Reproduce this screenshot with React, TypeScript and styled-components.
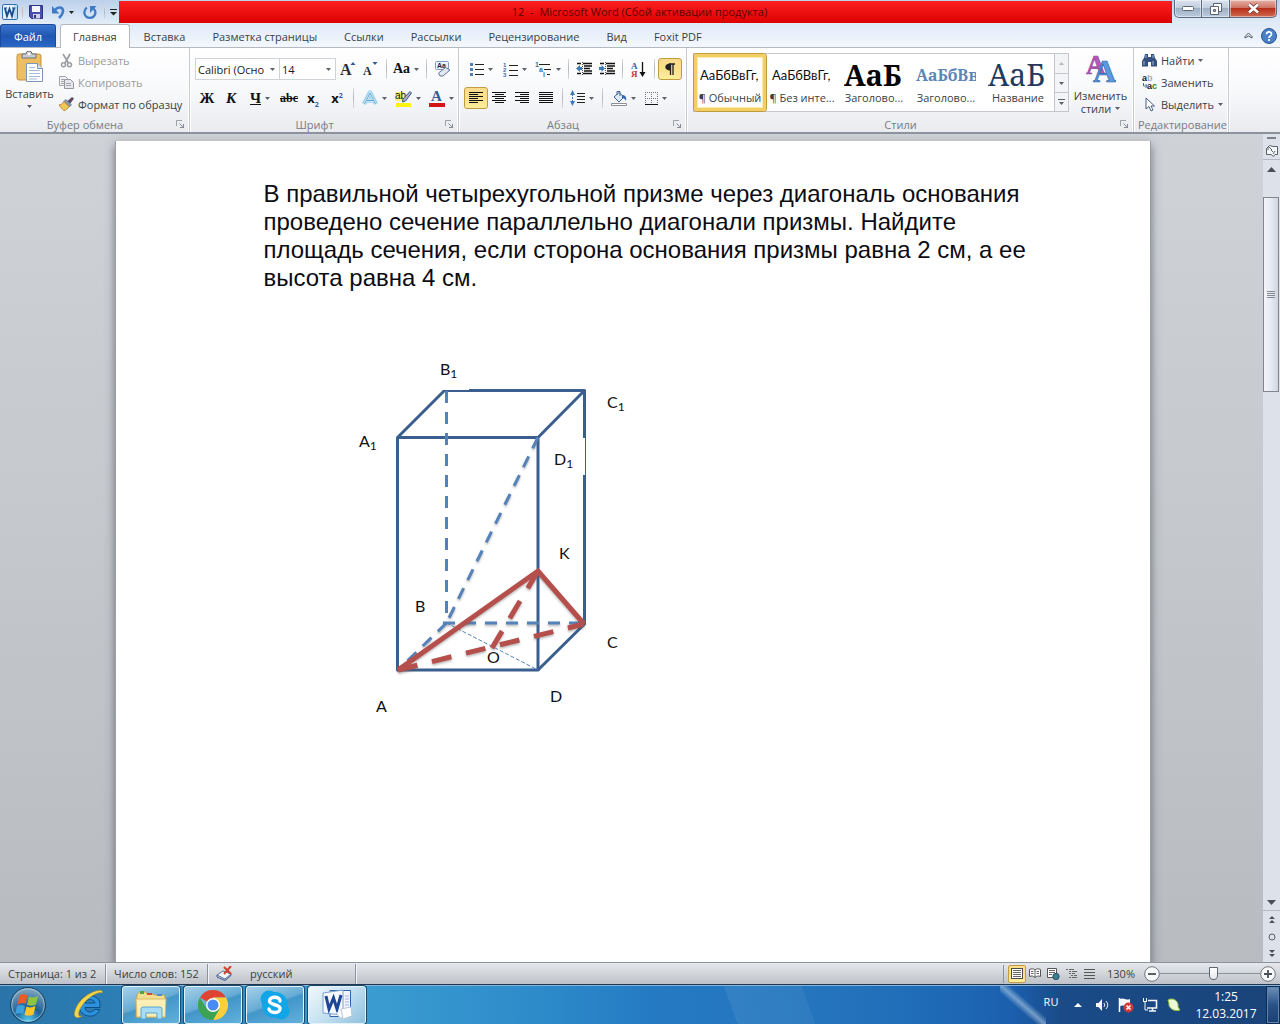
import React from "react";
import styled, { createGlobalStyle, css } from "styled-components";

const UI = `"Open Sans", "Noto Sans", sans-serif`;
const CALIBRI = `Lato, "Open Sans", sans-serif`;
const CAMBRIA = `"Noto Serif", "Liberation Serif", serif`;

const GlobalStyle = createGlobalStyle`
  * { box-sizing: border-box; }
  body { margin: 0; font-family: ${UI}; font-size: 11px; color: #3b3f45; }
  button, select, input { font: inherit; color: inherit; }
  button { border: 0; padding: 0; margin: 0; background: none; cursor: default; }
  svg { display: block; flex: none; }
`;

const Window = styled.div`
  display: flex;
  flex-direction: column;
  height: 100vh;
  overflow: hidden;
`;

/* ---------- title bar ---------- */

const TitleBar = styled.header`
  display: flex;
  height: 24px;
  flex: none;
  background: linear-gradient(#bcd0ea, #d3e2f4 60%, #e3edf8);
`;

const QuickAccess = styled.div`
  display: flex;
  align-items: center;
  width: 119px;
  padding-left: 1px;
`;

const QuickButton = styled.button<{ $w: number }>`
  display: flex;
  align-items: center;
  justify-content: center;
  gap: 4px;
  width: ${(p) => p.$w}px;
  height: 20px;
`;

const Divider = styled.span<{ $w?: number; $h?: number }>`
  display: flex;
  justify-content: center;
  width: ${(p) => p.$w ?? 8}px;
  height: ${(p) => p.$h ?? 20}px;
  &::before {
    content: "";
    width: 1px;
    background: linear-gradient(#d8dade, #b3b7bd 50%, #d8dade);
  }
`;

const Title = styled.h1`
  flex: 1;
  margin: 1px 0 0;
  padding-right: 12px;
  height: 22px;
  line-height: 22px;
  text-align: center;
  font-size: 11px;
  font-weight: 400;
  color: #5c0303;
  white-space: pre;
  background: linear-gradient(#fb2020, #ee1010 50%, #dc0000);
`;

const WindowButtons = styled.div`
  display: flex;
  width: 108px;
  height: 18px;
  padding: 0 3px 0 2px;
`;

const WindowButton = styled.button<{ $w: number; $close?: boolean }>`
  display: flex;
  align-items: center;
  justify-content: center;
  width: ${(p) => p.$w}px;
  border: 1px solid #5d6b80;
  border-top: 0;
  border-left-width: ${(p) => (p.$close ? 0 : 1)}px;
  box-shadow: inset 0 0 0 1px rgba(255, 255, 255, 0.45);
  background: ${(p) =>
    p.$close
      ? "linear-gradient(#e5b3a8, #cf7464 45%, #b8301b 50%, #cf6a50)"
      : "linear-gradient(#dbe3ee, #c3cedd 45%, #9fb0c6 50%, #bccbdd)"};
  border-radius: ${(p) => (p.$close ? "0 0 5px 0" : "0")};
  &:first-child { border-radius: 0 0 0 5px; }
  &:nth-child(2) { border-left-width: 0; }
`;

/* ---------- tabs ---------- */

const TabRow = styled.nav`
  display: flex;
  gap: 1px;
  height: 24px;
  flex: none;
  background: linear-gradient(#dfeaf7, #f4f8fd);
  border-bottom: 1px solid #b4b9bf;
`;

const FileTab = styled.button`
  width: 56px;
  height: 23px;
  margin-right: 3px;
  border: 1px solid #1d4a9c;
  border-bottom: 0;
  border-radius: 3px 3px 0 0;
  color: #fff;
  background: linear-gradient(#3a78cf, #1f56b3 50%, #2a68c8);
`;

const Tab = styled.button<{ $active?: boolean }>`
  padding: 0 13px;
  height: 24px;
  ${(p) =>
    p.$active &&
    css`
      padding: 0 12px;
      border: 1px solid #b4b9bf;
      border-bottom: 0;
      border-radius: 3px 3px 0 0;
      background: #fff;
    `}
`;

const TabTools = styled.div`
  display: flex;
  align-items: center;
  gap: 8px;
  margin-left: auto;
  padding-right: 3px;
`;

/* ---------- ribbon ---------- */

const Ribbon = styled.section`
  display: flex;
  height: 86px;
  flex: none;
  background: linear-gradient(#fff, #f8f9fb 50%, #e9ebef);
  border-bottom: 2px solid #8d939c;
`;

const Group = styled.section<{ $w: number }>`
  display: flex;
  flex-direction: column;
  width: ${(p) => p.$w}px;
  flex: none;
  border-right: 1px solid #c6cad0;
  box-shadow: inset -1px 0 #fff, 1px 0 #fff;
`;

const GroupBody = styled.div<{ $pad?: string }>`
  display: flex;
  flex: 1;
  min-width: 0;
  padding: ${(p) => p.$pad ?? "0"};
`;

const GroupFooter = styled.footer`
  display: flex;
  align-items: center;
  gap: 6px;
  height: 15px;
  color: #767c86;
  padding: 0 4px 0 0;
`;

const GroupName = styled.span`
  flex: 1;
  text-align: center;
  white-space: nowrap;
  &:only-child { padding-left: 4px; }
`;

const Launcher = styled.button`
  display: flex;
  width: 9px;
  height: 9px;
`;

const BigButton = styled.button<{ $w: number }>`
  display: flex;
  flex-direction: column;
  align-items: center;
  width: ${(p) => p.$w}px;
  flex: none;
  gap: 5px;
  padding-top: 2px;
  line-height: 13px;
`;

const BigLabel = styled.span`
  display: inline-flex;
  align-items: center;
  gap: 4px;
`;

const ButtonStack = styled.div`
  display: flex;
  flex-direction: column;
`;

const TextButton = styled.button<{ $muted?: boolean }>`
  display: flex;
  align-items: center;
  gap: 4px;
  height: 22px;
  white-space: nowrap;
  color: ${(p) => (p.$muted ? "#9b9b9b" : "#3b3f45")};
`;

const ToolRows = styled.div`
  display: flex;
  flex-direction: column;
  gap: 5px;
  padding-top: 9px;
`;

const ToolRow = styled.div`
  display: flex;
  align-items: center;
  height: 24px;
`;

const ToolButton = styled.button<{ $w: number; $on?: boolean }>`
  display: flex;
  align-items: center;
  justify-content: center;
  gap: 4px;
  width: ${(p) => p.$w}px;
  height: 22px;
  flex: none;
  border-radius: 3px;
  ${(p) =>
    p.$on &&
    css`
      border: 1px solid #c29b3f;
      background: linear-gradient(#fbdb8c, #fbe08a 50%, #fdee9c);
    `}
`;

const Combo = styled.span<{ $w: number }>`
  display: grid;
  align-items: center;
  width: ${(p) => p.$w}px;
  height: 22px;
  border: 1px solid #d0d3d8;
  background: #fff;
  & + & { border-left: 0; }
  select, svg { grid-area: 1 / 1; }
  svg { justify-self: end; margin-right: 4px; pointer-events: none; }
`;

const ComboSelect = styled.select`
  appearance: none;
  width: 100%;
  height: 20px;
  padding: 0 12px 0 2px;
  border: 0;
  background: none;
  color: #1a1a1a;
  overflow: hidden;
`;

/* ---------- style gallery ---------- */

const Gallery = styled.div`
  display: flex;
  height: 59px;
  border: 1px solid #c3c7cd;
  background: #fff;
`;

const StyleCard = styled.button<{ $on?: boolean }>`
  display: flex;
  flex-direction: column;
  align-items: center;
  justify-content: space-between;
  width: 72px;
  height: 57px;
  overflow: hidden;
  padding: 6px 2px 2px;
  line-height: 16px;
  border: 3px solid transparent;
  white-space: nowrap;
  ${(p) =>
    p.$on &&
    css`
      border-color: #f2cf63;
      border-radius: 3px;
      box-shadow: inset 0 0 0 1px #fbe9ae, 0 0 0 1px #c29b3f;
    `}
`;

const Preview = styled.span<{ $font: string; $size: number; $color: string; $bold?: boolean }>`
  width: 60px;
  height: 24px;
  line-height: 24px;
  text-align: left;
  overflow: hidden;
  font-family: ${(p) => p.$font};
  font-size: ${(p) => p.$size}px;
  font-weight: ${(p) => (p.$bold ? 700 : 400)};
  color: ${(p) => p.$color};
`;

const GalleryScroll = styled.div`
  display: grid;
  grid-template-rows: repeat(3, 1fr);
  width: 14px;
  border-left: 1px solid #c3c7cd;
  background: #f3f4f6;
`;

const GalleryArrow = styled.button`
  display: flex;
  align-items: center;
  justify-content: center;
  & + & { border-top: 1px solid #c3c7cd; }
`;

/* ---------- workspace ---------- */

const Workspace = styled.main`
  display: flex;
  flex: 1;
  min-height: 0;
`;

const Desk = styled.div`
  display: flex;
  justify-content: center;
  flex: 1;
  min-width: 0;
  padding: 7px 0 0 2px;
  overflow: hidden;
  background: linear-gradient(#cfd2d7, #c4c7cb 50%, #b8bbc0);
`;

const Page = styled.article`
  width: 1036px;
  padding: 39px 100px 0 148px;
  background: #fff;
  border: solid #9a9ea5;
  border-width: 0 1px;
  box-shadow: 0 4px 9px rgba(70, 75, 85, 0.7);
`;

const Problem = styled.p`
  margin: 0;
  font-family: "Liberation Sans", Arial, sans-serif;
  font-size: 24px;
  line-height: 28px;
  color: #0c0c14;
  white-space: nowrap;
`;

const Figure = styled.figure`
  margin: 58px 0 0 76px;
`;

const ScrollColumn = styled.aside`
  display: flex;
  flex-direction: column;
  align-items: center;
  width: 17px;
  background: #dde1ea;
`;

const ScrollButton = styled.button<{ $h: number; $line?: boolean }>`
  display: flex;
  align-items: center;
  justify-content: center;
  width: 17px;
  height: ${(p) => p.$h}px;
  flex: none;
  border-bottom: ${(p) => (p.$line ? "1px solid #b4b9c2" : "0")};
`;

const ScrollTrack = styled.div`
  flex: 1;
  width: 100%;
  padding-top: 19px;
`;

const ScrollThumb = styled.div`
  display: flex;
  align-items: center;
  justify-content: center;
  width: 16px;
  height: 28%;
  border: 1px solid #82868f;
  background: linear-gradient(90deg, #f3f5fa, #e6eaf2 50%, #cfd5e0);
`;

/* ---------- status bar ---------- */

const StatusBar = styled.footer`
  display: flex;
  align-items: center;
  height: 22px;
  flex: none;
  border-top: 1px solid #8d939c;
  background: linear-gradient(#e6e8ec, #cdd1d6 60%, #bfc3c9);
`;

const StatusItem = styled.button<{ $w: number; $edge?: boolean }>`
  display: flex;
  align-items: center;
  height: 20px;
  width: ${(p) => p.$w}px;
  padding-left: 8px;
  white-space: nowrap;
  border-right: 1px solid ${(p) => (p.$edge ? "#8d939c" : "transparent")};
  box-shadow: ${(p) => (p.$edge ? "1px 0 #f3f4f6" : "none")};
`;

const ViewTools = styled.div`
  display: flex;
  align-items: center;
  margin-left: auto;
  padding: 0 4px;
  border-left: 1px solid #8d939c;
`;

const ViewButton = styled(ToolButton)`
  height: 18px;
  border-radius: 2px;
`;

const ZoomValue = styled.button`
  width: 46px;
  text-align: center;
`;

const ZoomButton = styled.button`
  display: flex;
  width: 16px;
  height: 16px;
`;

const ZoomRange = styled.input`
  appearance: none;
  width: 100px;
  height: 16px;
  margin: 0;
  background: linear-gradient(#8d939c, #8d939c) center / 100% 1px no-repeat;
  &::-webkit-slider-thumb {
    appearance: none;
    width: 9px;
    height: 13px;
    background: linear-gradient(#fff, #e6e8ec);
    border: 1px solid #5f6670;
    border-radius: 1px 1px 5px 5px;
  }
`;

/* ---------- task bar ---------- */

const TaskBar = styled.footer`
  display: flex;
  align-items: center;
  height: 40px;
  flex: none;
  border-top: 1px solid #22364f;
  box-shadow: inset 0 1px #82b6dc;
  background:
    linear-gradient(to top right, transparent 40%, rgba(190, 215, 235, 0.55) 50%, transparent 60%) 81% 0 / 46px 40px no-repeat,
    linear-gradient(70deg, transparent 57%, rgba(255, 255, 255, 0.07) 57%, rgba(255, 255, 255, 0.05) 63%, transparent 63%),
    linear-gradient(90deg, #2a74a8 0, #2b7db3 8%, #3b9dd0 28%, #2f8ecb 40%, #2479c2 52%, #2474bd 65%, #1d66b4 76%, #1b5fae 79%, #1a4b88 83%, #194378 100%);
`;

const StartButton = styled.button`
  display: flex;
  justify-content: center;
  width: 55px;
`;

const Pinned = styled.button`
  display: flex;
  justify-content: center;
  width: 67px;
`;

const TaskButton = styled.button<{ $active?: boolean }>`
  display: flex;
  align-items: center;
  justify-content: center;
  width: 58px;
  height: 38px;
  margin-right: 4px;
  border: 1px solid #e3f2fb;
  border-radius: 3px;
  box-shadow: 0 0 0 1px #1b4a6c;
  background: ${(p) =>
    p.$active
      ? "linear-gradient(135deg, #f1f8fc, #c4e0f0 50%, #8fc1de)"
      : "linear-gradient(160deg, #a5d0e8, #67acd5 45%, #4296c8 50%, #62b1dc)"};
`;

const Tray = styled.div`
  display: flex;
  align-items: center;
  margin-left: auto;
  height: 100%;
  color: #fff;
`;

const TrayButton = styled.button<{ $w: number }>`
  display: flex;
  align-items: center;
  justify-content: center;
  width: ${(p) => p.$w}px;
`;

const Language = styled.button`
  width: 30px;
  padding-bottom: 6px;
`;

const Clock = styled.time`
  display: flex;
  flex-direction: column;
  width: 80px;
  text-align: center;
  line-height: 17px;
  font-size: 12px;
`;

const ShowDesktop = styled.button`
  width: 14px;
  height: 38px;
  border: 1px solid #0f2c50;
  box-shadow: inset 0 0 0 1px #5d84b0;
  background: linear-gradient(#6d90b8, #2a5287 50%, #1b3f72);
`;

/* ---------- icons ---------- */

const Svg = ({ w, h, children }: { w: number; h: number; children: React.ReactNode }) => (
  <svg width={w} height={h} viewBox={`0 0 ${w} ${h}`} fill="none" aria-hidden="true">
    {children}
  </svg>
);

const Caret = ({ color = "#5c6068" }: { color?: string }) => (
  <Svg w={5} h={3}><path d="M0 0h5L2.500 3z" fill={color} /></Svg>
);

const LauncherIcon = () => (
  <Svg w={9} h={9}>
    <path d="M.5 6V.5H6" stroke="#9a9fa8" />
    <path d="M3.500 3.500l3 3M7.500 4v3.500H4" stroke="#858a93" />
    <path d="M8 5v3H5z" fill="#858a93" />
  </Svg>
);

const WordIcon = () => (
  <Svg w={16} h={16}>
    <rect x=".5" y=".5" width="15" height="15" rx="1.500" fill="#e4f1fb" stroke="#2f6eb0" />
    <path d="M12 1h3v14h-3z" fill="#b9dcf3" />
    <path d="M3 4l2 8 2.500-7 2.500 7 2-8" stroke="#1b4b8f" strokeWidth="1.900" />
    <path d="M2 4h3M10 4h3.500" stroke="#1b4b8f" />
  </Svg>
);

const SaveIcon = () => (
  <Svg w={14} h={14}>
    <path d="M.5.500h13v13h-11l-2-2z" fill="#4a4fae" stroke="#2f3480" />
    <path d="M3 1h8v6H3z" fill="#f4f6fd" />
    <path d="M4 9h7v4.500H4z" fill="#d0d3e8" />
    <path d="M5 10h2v3H5z" fill="#2f3480" />
  </Svg>
);

const UndoIcon = () => (
  <Svg w={13} h={14}>
    <path d="M3 5c3-4 8-3 8 1 0 3-2 5-4 7" stroke="#3f7cc6" strokeWidth="2.600" />
    <path d="M0 1v7.500h7.500z" fill="#3f7cc6" />
  </Svg>
);

const RedoIcon = () => (
  <Svg w={14} h={14}>
    <path d="M3.800 2.500C-1 7 2 12.800 7 12.800s7.500-5.800 3-9.800" stroke="#3f7cc6" strokeWidth="2.300" />
    <path d="M7 8V1h6.500z" fill="#3f7cc6" />
  </Svg>
);

const PasteIcon = () => (
  <Svg w={28} h={31}>
    <rect x="1" y="3" width="24" height="26" rx="2" fill="#eebf62" stroke="#c6913a" />
    <path d="M6 7V3h4a3 3 0 0 1 6 0h4v4z" fill="#c9cdd3" stroke="#6e737b" />
    <circle cx="13" cy="3" r="1.300" fill="#fff" />
    <path d="M10.500 12.500h11l5 5v13h-16z" fill="#fdfeff" stroke="#7f95b5" />
    <path d="M21.500 12.500v5h5" fill="#d8e4f4" stroke="#7f95b5" />
    <path d="M13 16.500h6M13 19.500h11M13 22.500h11M13 25.500h11M13 28h8" stroke="#a9bbd6" />
  </Svg>
);

const CutIcon = () => (
  <Svg w={15} h={15}>
    <path d="M4 1l5.500 9M11 1L6 10" stroke="#9a9da3" strokeWidth="1.700" />
    <circle cx="4.500" cy="11.800" r="2" stroke="#9a9da3" strokeWidth="1.500" />
    <circle cx="10.500" cy="11.800" r="2" stroke="#9a9da3" strokeWidth="1.500" />
  </Svg>
);

const CopyIcon = () => (
  <Svg w={15} h={14}>
    <path d="M.5 1.500h6l2 2v7h-8z" fill="#f0f0f2" stroke="#a3a6ad" />
    <path d="M5.500 4.500h6l3 3v6h-9z" fill="#e6e7ea" stroke="#94979e" />
    <path d="M2 4.500h3M2 6.500h3M2 8.500h3M7 8.500h5M7 10.500h5" stroke="#a3a6ad" />
  </Svg>
);

const BrushIcon = () => (
  <Svg w={15} h={14}>
    <path d="M15 1.500L13 0 8.500 4 11 7z" fill="#5c4c66" />
    <path d="M7 2.500l5.500 5.500-2.500 2-5.500-5.500z" fill="#8a97ad" stroke="#55617a" strokeWidth=".6" />
    <path d="M5 4.500L10 9.500c-1 2-3 3.500-5 4.300-1-1-4-4-5-6 2 0 3.500-1.300 5-3.300z" fill="#f0c657" stroke="#a97e2a" strokeWidth=".8" />
  </Svg>
);

const Glyph = styled.span<{ $size: number; $italic?: boolean; $deco: string }>`
  font-family: "Liberation Serif", serif;
  font-weight: 700;
  font-size: ${(p) => p.$size}px;
  line-height: 18px;
  font-style: ${(p) => (p.$italic ? "italic" : "normal")};
  text-decoration: ${(p) => p.$deco};
  color: #111;
`;

const Serif = ({ children, size = 15, italic, under, strike }: { children: string; size?: number; italic?: boolean; under?: boolean; strike?: boolean }) => (
  <Glyph $size={size} $italic={italic} $deco={under ? "underline" : strike ? "line-through" : "none"}>{children}</Glyph>
);

const Script = styled.span`
  font-weight: 700;
  font-size: 13px;
  line-height: 16px;
  color: #111;
  sub, sup { font-size: 7px; line-height: 0; color: #2c5aa8; }
`;

const SizeIcon = ({ up }: { up?: boolean }) => (
  <Svg w={16} h={16}>
    <text x="0" y="14" fontFamily="Liberation Serif" fontWeight="700" fontSize={up ? 16 : 12} fill="#2a2d33">A</text>
    <path d={up ? "M10.500 4h5L13 1z" : "M9.500 1h5L12 4z"} fill="#2c5a96" />
  </Svg>
);

const ClearIcon = () => (
  <Svg w={17} h={16}>
    <rect x="1.500" y=".5" width="13" height="8" rx="1" fill="#e9f1fb" stroke="#7f9dc4" />
    <text x="3" y="7" fontFamily="Liberation Sans" fontWeight="700" fontSize="7" fill="#1b2a44">Aa</text>
    <path d="M4.500 12l7-5.500 4.500 2.500-7 6H6z" fill="#e3e7f3" stroke="#65749a" />
  </Svg>
);

const EffectIcon = () => (
  <Svg w={16} h={16}>
    <path d="M2 14L8 2.500 14 14M5 10.500h6" stroke="#9fd3ee" strokeWidth="4.500" strokeLinejoin="round" />
    <path d="M2.500 14L8 3l5.500 11M5 10.500h6" stroke="#e9f7fd" strokeWidth="1.800" />
    <path d="M2.500 14L8 3l5.500 11M5 10.500h6" stroke="#4e96c8" strokeWidth=".9" />
  </Svg>
);

const HighlightIcon = () => (
  <Svg w={17} h={17}>
    <path d="M1 13h15v4H1z" fill="#fbf315" />
    <path d="M0 2h9v9H0z" fill="#fbf27a" />
    <text x="0" y="9" fontFamily="Liberation Sans" fontSize="10" fill="#111">ab</text>
    <path d="M15 1.500l1.500 1.500-6 8-3 1 .5-3z" fill="#9fb4d0" stroke="#445877" />
  </Svg>
);

const FontColorIcon = () => (
  <Svg w={16} h={17}>
    <text x="2" y="11" fontFamily="Liberation Serif" fontWeight="700" fontSize="15" fill="#3a5a94">A</text>
    <path d="M0 13h16v4H0z" fill="#d41414" />
  </Svg>
);

const BulletIcon = () => (
  <Svg w={14} h={14}>
    <path d="M5 2.500h9M5 7.500h9M5 12.500h9" stroke="#222" />
    <path d="M0 1h3v3H0zM0 6h3v3H0zM0 11h3v3H0z" fill="#4d7fb8" />
  </Svg>
);

const NumberIcon = () => (
  <Svg w={15} h={15}>
    <path d="M6 3.500h9M6 8.500h9M6 13.500h9" stroke="#222" />
    <g fontFamily="Liberation Sans" fontWeight="700" fontSize="6" fill="#3c6ea9">
      <text x="0" y="5">1</text><text x="0" y="10">2</text><text x="0" y="15">3</text>
    </g>
  </Svg>
);

const MultiIcon = () => (
  <Svg w={17} h={15}>
    <path d="M4 2.500h11M9 7.500h7M12 12.500h3" stroke="#222" />
    <g fontFamily="Liberation Sans" fontWeight="700" fontSize="7" fill="#3c6ea9">
      <text x="0" y="5">1</text><text x="4" y="10">a</text><text x="8" y="15">i</text>
    </g>
  </Svg>
);

const IndentIcon = ({ out }: { out?: boolean }) => (
  <Svg w={16} h={14}>
    <path d="M1 1.500h4M7 1.500h9M8 4h8M8 6.500h6M8 9h8M1 11.500h4M7 11.500h9" stroke="#111" strokeWidth="1.400" />
    <path d="M6.500 0v14" stroke="#555" strokeDasharray="1 1" />
    <path d={out ? "M0 6.500L4 3v2h2v3H4v2z" : "M6 6.500L2.500 3v2H0v3h2.500v2z"} fill="#3f78bd" />
  </Svg>
);

const SortIcon = () => (
  <Svg w={15} h={17}>
    <g fontFamily="Liberation Serif" fontWeight="700" fontSize="9">
      <text x="0" y="8" fill="#3a5f9c">A</text><text x="0" y="16" fill="#b23a48">Я</text>
    </g>
    <path d="M11.500 1v12" stroke="#111" strokeWidth="1.300" />
    <path d="M8.500 11h6l-3 5z" fill="#111" />
  </Svg>
);

const PilcrowIcon = () => (
  <Svg w={10} h={13}>
    <path d="M5.500 1v11M8 1v11M4 1h6" stroke="#222" strokeWidth="1.300" />
    <path d="M5.500 .5v7C-1.500 7.500-1.500.5 5.500.5z" fill="#222" />
  </Svg>
);

const AlignIcon = ({ kind }: { kind: "left" | "center" | "right" | "full" }) => {
  const widths = kind === "full" ? [14, 14, 14, 14, 14, 14] : [14, 9, 14, 9, 14, 9];
  return (
    <Svg w={14} h={12}>
      {widths.map((w, i) => (
        <rect key={i} x={kind === "right" ? 14 - w : kind === "center" ? Math.round((14 - w) / 2) : 0} y={i * 2} width={w} height="1" fill="#111" />
      ))}
    </Svg>
  );
};

const SpacingIcon = () => (
  <Svg w={15} h={16}>
    <path d="M7 3.500h8M7 6.500h8M7 9.500h8M7 12.500h8" stroke="#222" />
    <path d="M2.500 4v8" stroke="#3f78bd" strokeDasharray="2 1" />
    <path d="M0 5h5L2.500 0zM0 11h5l-2.500 5z" fill="#3f78bd" />
  </Svg>
);

const FillIcon = () => (
  <Svg w={16} h={16}>
    <path d="M.5 13.500h15v2H.500z" fill="#fff" stroke="#8d8f94" />
    <path d="M3 7l5-4.500L13 7l-5 5z" fill="#dce9f7" stroke="#46658f" />
    <path d="M6 5V1.500h3V6" stroke="#46658f" />
    <path d="M11 5c3 0 5 2 4 6-1-2-2-3-4-3z" fill="#2f68b0" />
  </Svg>
);

const BorderIcon = () => (
  <Svg w={13} h={13}>
    <path d="M.5 0v12M6.500 0v12M12.500 0v12M0 .5h13M0 6.500h13" stroke="#777" strokeDasharray="1 1" />
    <path d="M0 12.500h13" stroke="#111" />
  </Svg>
);

const StylesIcon = () => (
  <Svg w={30} h={29}>
    <text x="0" y="19" fontFamily="Liberation Serif" fontWeight="700" fontSize="27" fill="#b45ab8" stroke="#8c3e96" strokeWidth=".6">A</text>
    <text x="7" y="27" fontFamily="Liberation Serif" fontWeight="700" fontSize="32" fill="#5d9add" stroke="#2f66ae" strokeWidth=".7">A</text>
  </Svg>
);

const FindIcon = () => (
  <Svg w={15} h={13}>
    <path d="M3 0h3v3h3V0h3l1 4 2 3v5.500H9V8H6v4.500H0V7l2-3z" fill="#34517e" />
    <path d="M4 1v3M2 7v4M11 1v3M11 7v4" stroke="#9db6d9" />
  </Svg>
);

const ReplaceIcon = () => (
  <Svg w={15} h={15}>
    <g fontFamily="Liberation Sans" fontWeight="700" fontSize="9">
      <text x="0" y="6" fill="#222">a</text><text x="5" y="6" fill="#aaa">b</text>
      <text x="5" y="14" fill="#222">a</text><text x="10" y="14" fill="#2a8a2a">c</text>
    </g>
    <path d="M1.500 8v3H5M3.500 9l2 2-2 2" stroke="#3c6ea9" />
  </Svg>
);

const PointerIcon = () => (
  <Svg w={15} h={15}>
    <path d="M4 1v11l3-2.500L9 14l2-1-2-4h3.500z" fill="#fff" stroke="#4a5f85" />
  </Svg>
);

const ChevronUp = () => (
  <Svg w={9} h={7}><path d="M1 4.500L4.500 1 8 4.500V6L4.500 4 1 6z" stroke="#4b5461" /></Svg>
);

const HelpIcon = () => (
  <Svg w={16} h={16}>
    <circle cx="8" cy="8" r="7.500" fill="#4c80c6" stroke="#2c5590" />
    <path d="M5.500 6.300c0-3.300 5-3.300 5-.3 0 2-2.500 2-2.500 4M8 11v2" stroke="#fff" strokeWidth="1.700" />
  </Svg>
);

const ProofIcon = () => (
  <Svg w={17} h={15}>
    <path d="M1 9l6-4 8 3-6 5z" fill="#f4f7fc" stroke="#5572a3" />
    <path d="M1 9v2l8 3.500 6-5V8" stroke="#3c5c94" />
    <path d="M8 1l7 7M15 0L8 8" stroke="#d4402e" strokeWidth="2" />
  </Svg>
);

const PageViewIcon = () => (
  <Svg w={12} h={11}>
    <rect x=".5" y=".5" width="11" height="10" fill="#fff" stroke="#4c4c4c" />
    <path d="M2 2.500h8M2 4.500h8M2 6.500h8M2 8.500h8" stroke="#666" />
  </Svg>
);

const ReadViewIcon = () => (
  <Svg w={12} h={11}>
    <path d="M.5 1.500c2-1 4-1 5.500.5 1.500-1.500 3.500-1.500 5.500-.5v7c-2-1-4-.5-5.500 1-1.500-1.500-3.500-2-5.500-1z" fill="#fff" stroke="#555" />
    <path d="M6 2v8M2 3.500h2.500M2 5.500h2.500M7.500 3.500H10M7.500 5.500H10" stroke="#666" />
  </Svg>
);

const WebViewIcon = () => (
  <Svg w={13} h={12}>
    <path d="M.5.500h9v9h-9z" fill="#fff" stroke="#555" />
    <path d="M2 2.500h6M2 4.500h6M2 6.500h3" stroke="#666" />
    <circle cx="9" cy="8.500" r="3.200" fill="#3a7d8f" stroke="#2a5570" />
  </Svg>
);

const OutlineIcon = () => (
  <Svg w={11} h={10}>
    <path d="M0 .5h8M3 2.500h8M3 4.500h6M5 6.500h6M3 8.500h8" stroke="#666" strokeDasharray="2 1 8" />
  </Svg>
);

const DraftIcon = () => (
  <Svg w={11} h={10}><path d="M0 .5h11M0 3.500h11M0 6.500h11M0 9.500h11" stroke="#555" /></Svg>
);

const ZoomSign = ({ plus }: { plus?: boolean }) => (
  <Svg w={16} h={16}>
    <circle cx="8" cy="8" r="7.300" fill="#f8f9fb" stroke="#70757e" />
    <path d={plus ? "M4 8h8M8 4v8" : "M4 8h8"} stroke="#4c5159" strokeWidth="1.800" />
  </Svg>
);

const StartOrb = () => (
  <Svg w={38} h={38}>
    <defs>
      <radialGradient id="orb" cx="50%" cy="95%" r="90%">
        <stop offset="0" stopColor="#57cdf0" /><stop offset=".45" stopColor="#1d5f92" /><stop offset="1" stopColor="#7fa5bf" />
      </radialGradient>
    </defs>
    <circle cx="19" cy="19" r="17.500" fill="url(#orb)" stroke="#1b3f5c" />
    <circle cx="19" cy="19" r="16.300" stroke="#b7d8ea" strokeOpacity=".6" />
    <path d="M10.500 9.500c3.500-2 6-1 8 0L16.500 18c-3-1.500-5.500-1-8 .5z" fill="#ee5a28" />
    <path d="M20 10.500c3 1.500 6 1 9-.5L27 18.500c-3 1.500-6 1.500-9 .5z" fill="#8cc63e" />
    <path d="M8 20c3-1.500 5.500-1.500 8 0L14 28c-3-1.500-5.500-1-8 .5z" fill="#3fa0e0" />
    <path d="M17.500 20.500c3 1.500 6 1 9-.5l-2 8.500c-3 1.500-6 1.500-9 .5z" fill="#fcc62b" />
  </Svg>
);

const ExplorerE = () => (
  <Svg w={32} h={32}>
    <path d="M27 18.500H12c0 5 7.500 6 9.500 2h5C23.500 31 6 28.500 6 16.500S26 3 27 15z" fill="#2b93dd" stroke="#104d87" />
    <path d="M12 14c1-4.500 9-4.500 10 0z" fill="#2f86bd" stroke="#104d87" />
    <path d="M29 4C32-2 11 3 4 17c-5 10-2 14 5 10-4 1-5-2-1-9C14 8 26 2 29 4z" fill="#f7d54a" stroke="#c69618" strokeWidth=".6" />
  </Svg>
);

const FolderIcon = () => (
  <Svg w={32} h={30}>
    <path d="M2 5l2-3h7l1 2h6l1 1h10l1 2v20H1z" fill="#f4de91" stroke="#c9a74e" />
    <path d="M5 1h4v3H5z" fill="#4ca64c" /><path d="M12 3h5v2h-5z" fill="#d6483a" /><path d="M22 4h5v2h-5z" fill="#4d8edb" />
    <path d="M1 9h30l-1 18H2z" fill="#fbefb5" stroke="#d9bb66" />
    <path d="M6 29V19q0-2 2-2h17q2 0 2 2v10h-5v-6H11v6z" fill="#a8dcf5" stroke="#5ba4d0" />
  </Svg>
);

const ChromeIcon = () => (
  <Svg w={30} h={30}>
    <path d="M15 15L2 7.500A15 15 0 0 1 28 7.500H15z" fill="#de4334" />
    <path d="M15 15V7.500h13A15 15 0 0 1 15 30l6.500-11.250z" fill="#fbcf3b" />
    <path d="M2 7.500A15 15 0 0 0 15 30l6.500-11.250L15 15l-6.500 3.750z" fill="#3ca353" />
    <circle cx="15" cy="15" r="7" fill="#fff" />
    <circle cx="15" cy="15" r="5.500" fill="#4a8af4" />
  </Svg>
);

const SkypeIcon = () => (
  <Svg w={30} h={30}>
    <circle cx="9" cy="9" r="8.500" fill="#12a5e8" />
    <circle cx="21" cy="21" r="8.500" fill="#12a5e8" />
    <circle cx="15" cy="15" r="13" fill="#12a5e8" />
    <path d="M20 11c0-5-10.500-5-10.500 0 0 4.500 10.500 3 10.500 7.500 0 5.500-10.500 5-11 .5" stroke="#fff" strokeWidth="3.400" strokeLinecap="round" />
  </Svg>
);

const WordTaskIcon = () => (
  <Svg w={32} h={32}>
    <path d="M9 1.500h20.500v26H9z" fill="#eef5fc" stroke="#2f66ab" />
    <path d="M24 7h4M24 10h4M24 13h4M24 16h4" stroke="#9db8dc" />
    <path d="M2 4l20-3v25L2 24z" fill="#f5f9fe" stroke="#7c9fcc" />
    <path d="M5 7l3 13 4.500-11 3.500 11 4-14" stroke="#1c4694" strokeWidth="3" />
    <path d="M15 23l4 6 6-2" fill="#fff" stroke="#c3cddd" />
    <path d="M20 20l10-2 1 9-9 3z" fill="#fff" stroke="#b9c5d8" />
  </Svg>
);

const SpeakerIcon = () => (
  <Svg w={14} h={14}>
    <path d="M1 5h2.500L7 1v12L3.500 9H1z" fill="#f5f8fb" />
    <path d="M9 5q1.500 2 0 4M11 3q3.500 4 0 8" stroke="#e3ebf3" />
  </Svg>
);

const FlagIcon = () => (
  <Svg w={16} h={16}>
    <path d="M1.500 1v14" stroke="#fff" strokeWidth="1.500" />
    <path d="M2 2c4-2 6 2 10 0v7c-4 2-6-2-10 0z" fill="#f5f8fb" />
    <circle cx="10.500" cy="10.500" r="5" fill="#d23a3a" />
    <path d="M8.500 8.500l4 4M12.500 8.500l-4 4" stroke="#fff" strokeWidth="1.500" />
  </Svg>
);

const NetworkIcon = () => (
  <Svg w={16} h={16}>
    <path d="M6 3.500h8.500v7.500H5" stroke="#f5f8fb" strokeWidth="1.600" />
    <path d="M7 14h7M10.500 11v3" stroke="#f5f8fb" strokeWidth="1.500" />
    <path d="M1.500 1v3M4.500 1v3M1 4.500h4M3 5v8h3" stroke="#f5f8fb" />
  </Svg>
);

const LeafIcon = () => (
  <Svg w={14} h={14}>
    <path d="M1 2c5-3 11 1 10 7l2 3c-6 2-12-2-11-7z" fill="#eef8d4" stroke="#9cc63f" />
  </Svg>
);

/* Regular prism with the section AKC; coordinates share one drawing space */
const Prism = () => (
  <svg width="300" height="380" viewBox="340 350 300 380" role="img" aria-label="ABCDA1B1C1D1">
    <defs>
      <filter id="shade" x="-20%" y="-20%" width="140%" height="140%">
        <feDropShadow dx="0" dy="1.500" stdDeviation="1.200" floodColor="#555" floodOpacity=".45" />
      </filter>
    </defs>
    <g stroke="#3a5f8f" strokeWidth="3" fill="none">
      <path d="M397.500 670V437.500H538V670zM397.500 437.500L444.500 390.500H584.500L538 437.500" strokeLinejoin="round" />
      <path d="M584.500 390V438M584.500 475V624L538 670" strokeLinejoin="round" />
      <path d="M585.500 438v37" strokeWidth="1" />
    </g>
    <path d="M440 387h29v3h-29z" fill="#fff" />
    <g stroke="#5482b8" strokeWidth="3" fill="none">
      <path d="M446.500 391V622" strokeDasharray="12 9" filter="url(#bar)" />
    </g>
    <g stroke="#5482b8" strokeWidth="3" fill="none" filter="url(#shade)">
      <path d="M538 437.500L446.500 623" strokeDasharray="12 9" />
      <path d="M443 623H584" strokeDasharray="12 9" />
      <path d="M446.500 623L398 670" strokeDasharray="12 9" />
    </g>
    <path d="M446.500 623L538 670" stroke="#5482b8" strokeDasharray="4 2" />
    <g stroke="#b54f4c" fill="none" filter="url(#shade)">
      <path d="M398 670L538 571L584 624" strokeWidth="5" />
      <path d="M398 670L584 624" strokeWidth="5" strokeDasharray="20 15" />
      <path d="M538 571L492 648" strokeWidth="5" strokeDasharray="20 15" />
    </g>
    <g fontFamily={CALIBRI} fontSize="16" fill="#111">
      <text x="440" y="375">B<tspan fontSize="12" dy="3">1</tspan></text>
      <text x="607" y="408">C<tspan fontSize="12" dy="3">1</tspan></text>
      <text x="359" y="447">A<tspan fontSize="12" dy="3">1</tspan></text>
      <text x="554" y="465">D<tspan fontSize="12" dy="3">1</tspan></text>
      <text x="559" y="559">K</text>
      <text x="415" y="612">B</text>
      <text x="607" y="648">C</text>
      <text x="487" y="663">O</text>
      <text x="550" y="702">D</text>
      <text x="376" y="712">A</text>
    </g>
  </svg>
);

/* ---------- data ---------- */

const TABS = ["Вставка", "Разметка страницы", "Ссылки", "Рассылки", "Рецензирование", "Вид", "Foxit PDF"];

const STYLES = [
  { name: "¶ Обычный", text: "АаБбВвГг,", font: CALIBRI, size: 13, color: "#111" },
  { name: "¶ Без инте...", text: "АаБбВвГг,", font: CALIBRI, size: 13, color: "#111" },
  { name: "Заголово...", text: "АаБ", font: CAMBRIA, size: 29, color: "#050505", bold: true },
  { name: "Заголово...", text: "АаБбВв", font: CAMBRIA, size: 16, color: "#5b87b8", bold: true },
  { name: "Название", text: "АаБ", font: CAMBRIA, size: 30, color: "#1f3c5f" },
];

const PROBLEM = [
  "В правильной четырехугольной призме через диагональ основания",
  "проведено сечение параллельно диагонали призмы. Найдите",
  "площадь сечения, если сторона основания призмы равна 2 см, а ее",
  "высота равна 4 см.",
];

const Footer = ({ name, launcher = true }: { name: string; launcher?: boolean }) => (
  <GroupFooter>
    <GroupName>{name}</GroupName>
    {launcher && <Launcher aria-label={name}><LauncherIcon /></Launcher>}
  </GroupFooter>
);

export default function App() {
  return (
    <Window>
      <GlobalStyle />
      <TitleBar>
        <QuickAccess>
          <QuickButton $w={17} aria-label="Word"><WordIcon /></QuickButton>
          <Divider $h={14} />
          <QuickButton $w={20} aria-label="Сохранить"><SaveIcon /></QuickButton>
          <QuickButton $w={34} aria-label="Отменить"><UndoIcon /><Caret color="#222" /></QuickButton>
          <QuickButton $w={20} aria-label="Повторить"><RedoIcon /></QuickButton>
          <Divider $h={14} />
          <QuickButton $w={10} aria-label="Настройка панели">
            <Svg w={7} h={7}><path d="M0 .5h7" stroke="#222" /><path d="M0 3h7L3.500 6.500z" fill="#222" /></Svg>
          </QuickButton>
        </QuickAccess>
        <Title>{"12  -  Microsoft Word (Сбой активации продукта)"}</Title>
        <WindowButtons>
          <WindowButton $w={28} aria-label="Свернуть">
            <Svg w={12} h={5}><rect x=".5" y=".5" width="11" height="4" rx="1" fill="#fff" stroke="#5b6675" /></Svg>
          </WindowButton>
          <WindowButton $w={28} aria-label="Восстановить">
            <Svg w={12} h={12}>
              <path d="M3.500.5h8v8h-8z" fill="#fff" stroke="#5b6675" />
              <path d="M.5 3.500h8v8h-8z" fill="#fff" stroke="#5b6675" />
              <path d="M3.500 6.500h2v2h-2z" fill="#9fb0c6" stroke="#5b6675" />
            </Svg>
          </WindowButton>
          <WindowButton $w={47} $close aria-label="Закрыть">
            <Svg w={13} h={11}>
              <path d="M2 1.500l9 8M11 1.500l-9 8" stroke="#6b3a36" strokeWidth="4" />
              <path d="M2 1.500l9 8M11 1.500l-9 8" stroke="#fff" strokeWidth="2.600" />
            </Svg>
          </WindowButton>
        </WindowButtons>
      </TitleBar>

      <TabRow>
        <FileTab>Файл</FileTab>
        <Tab $active>Главная</Tab>
        {TABS.map((t) => <Tab key={t}>{t}</Tab>)}
        <TabTools>
          <QuickButton $w={10} aria-label="Свернуть ленту"><ChevronUp /></QuickButton>
          <QuickButton $w={16} aria-label="Справка"><HelpIcon /></QuickButton>
        </TabTools>
      </TabRow>

      <Ribbon>
        <Group $w={190}>
          <GroupBody $pad="1px 0 0">
            <BigButton $w={59}>
              <PasteIcon />
              <BigLabel>Вставить</BigLabel>
              <Caret />
            </BigButton>
            <ButtonStack>
              <TextButton $muted><CutIcon />Вырезать</TextButton>
              <TextButton $muted><CopyIcon />Копировать</TextButton>
              <TextButton><BrushIcon />Формат по образцу</TextButton>
            </ButtonStack>
          </GroupBody>
          <Footer name="Буфер обмена" />
        </Group>

        <Group $w={269}>
          <GroupBody $pad="0 0 0 5px">
            <ToolRows>
              <ToolRow>
                <Combo $w={85}>
                  <ComboSelect aria-label="Шрифт"><option>Calibri (Осно</option></ComboSelect>
                  <Caret />
                </Combo>
                <Combo $w={56}>
                  <ComboSelect aria-label="Размер шрифта"><option>14</option></ComboSelect>
                  <Caret />
                </Combo>
                <ToolButton $w={24} aria-label="Увеличить размер"><SizeIcon up /></ToolButton>
                <ToolButton $w={22} aria-label="Уменьшить размер"><SizeIcon /></ToolButton>
                <Divider />
                <ToolButton $w={32} aria-label="Регистр"><Serif size={14}>Aa</Serif><Caret /></ToolButton>
                <Divider />
                <ToolButton $w={24} aria-label="Очистить формат"><ClearIcon /></ToolButton>
              </ToolRow>
              <ToolRow>
                <ToolButton $w={24} aria-label="Полужирный"><Serif>Ж</Serif></ToolButton>
                <ToolButton $w={24} aria-label="Курсив"><Serif italic>К</Serif></ToolButton>
                <ToolButton $w={34} aria-label="Подчеркнутый"><Serif under>Ч</Serif><Caret /></ToolButton>
                <ToolButton $w={24} aria-label="Зачеркнутый"><Serif size={12} strike>abc</Serif></ToolButton>
                <ToolButton $w={24} aria-label="Подстрочный"><Script>x<sub>2</sub></Script></ToolButton>
                <ToolButton $w={24} aria-label="Надстрочный"><Script>x<sup>2</sup></Script></ToolButton>
                <Divider />
                <ToolButton $w={34} aria-label="Эффекты"><EffectIcon /><Caret /></ToolButton>
                <ToolButton $w={34} aria-label="Выделение"><HighlightIcon /><Caret /></ToolButton>
                <ToolButton $w={32} aria-label="Цвет текста"><FontColorIcon /><Caret /></ToolButton>
              </ToolRow>
            </ToolRows>
          </GroupBody>
          <Footer name="Шрифт" />
        </Group>

        <Group $w={228}>
          <GroupBody $pad="0 0 0 5px">
            <ToolRows>
              <ToolRow>
                <ToolButton $w={34} aria-label="Маркеры"><BulletIcon /><Caret /></ToolButton>
                <ToolButton $w={34} aria-label="Нумерация"><NumberIcon /><Caret /></ToolButton>
                <ToolButton $w={32} aria-label="Многоуровневый список"><MultiIcon /><Caret /></ToolButton>
                <Divider />
                <ToolButton $w={24} aria-label="Уменьшить отступ"><IndentIcon out /></ToolButton>
                <ToolButton $w={22} aria-label="Увеличить отступ"><IndentIcon /></ToolButton>
                <Divider />
                <ToolButton $w={24} aria-label="Сортировка"><SortIcon /></ToolButton>
                <Divider />
                <ToolButton $w={24} $on aria-label="Все знаки"><PilcrowIcon /></ToolButton>
              </ToolRow>
              <ToolRow>
                <ToolButton $w={24} $on aria-label="По левому краю"><AlignIcon kind="left" /></ToolButton>
                <ToolButton $w={22} aria-label="По центру"><AlignIcon kind="center" /></ToolButton>
                <ToolButton $w={24} aria-label="По правому краю"><AlignIcon kind="right" /></ToolButton>
                <ToolButton $w={24} aria-label="По ширине"><AlignIcon kind="full" /></ToolButton>
                <Divider />
                <ToolButton $w={32} aria-label="Интервал"><SpacingIcon /><Caret /></ToolButton>
                <Divider />
                <ToolButton $w={34} aria-label="Заливка"><FillIcon /><Caret /></ToolButton>
                <ToolButton $w={32} aria-label="Границы"><BorderIcon /><Caret /></ToolButton>
              </ToolRow>
            </ToolRows>
          </GroupBody>
          <Footer name="Абзац" />
        </Group>

        <Group $w={447}>
          <GroupBody $pad="5px 0 0 6px">
            <Gallery>
              {STYLES.map((s, i) => (
                <StyleCard key={i} $on={i === 0}>
                  <Preview $font={s.font} $size={s.size} $color={s.color} $bold={s.bold}>{s.text}</Preview>
                  <span>{s.name}</span>
                </StyleCard>
              ))}
              <GalleryScroll>
                <GalleryArrow aria-label="Вверх"><Svg w={5} h={3}><path d="M0 3h5L2.500 0z" fill="#b4b8be" /></Svg></GalleryArrow>
                <GalleryArrow aria-label="Вниз"><Caret /></GalleryArrow>
                <GalleryArrow aria-label="Дополнительно">
                  <Svg w={7} h={7}><path d="M0 .5h7" stroke="#5c6068" /><path d="M1 3h5L3.500 6z" fill="#5c6068" /></Svg>
                </GalleryArrow>
              </GalleryScroll>
            </Gallery>
            <BigButton $w={63}>
              <StylesIcon />
              <span>
                <BigLabel>Изменить</BigLabel><br />
                <BigLabel>стили <Caret /></BigLabel>
              </span>
            </BigButton>
          </GroupBody>
          <Footer name="Стили" />
        </Group>

        <Group $w={95}>
          <GroupBody $pad="1px 0 0 8px">
            <ButtonStack>
              <TextButton><FindIcon />Найти <Caret /></TextButton>
              <TextButton><ReplaceIcon />Заменить</TextButton>
              <TextButton><PointerIcon />Выделить <Caret /></TextButton>
            </ButtonStack>
          </GroupBody>
          <Footer name="Редактирование" launcher={false} />
        </Group>
      </Ribbon>

      <Workspace>
        <Desk>
          <Page>
            <Problem>
              {PROBLEM.map((line, i) => <React.Fragment key={i}>{i > 0 && <br />}{line}</React.Fragment>)}
            </Problem>
            <Figure><Prism /></Figure>
          </Page>
        </Desk>
        <ScrollColumn>
          <ScrollButton $h={8} aria-label="Разделить"><Svg w={9} h={2}><path d="M0 0h9v2H0z" fill="#7b8089" /></Svg></ScrollButton>
          <ScrollButton $h={18} $line aria-label="Линейка">
            <Svg w={12} h={12}>
              <path d="M.5 3.500V9.500H5L7.500 11.500 9 9.500h2.500v-8H7L3.500.500z" fill="#f5f6f8" stroke="#5b6069" />
              <path d="M3 2l3 3M7 9l2-3M5 5l2 2M2 2v3" stroke="#5b6069" />
            </Svg>
          </ScrollButton>
          <ScrollButton $h={18} aria-label="Прокрутить вверх"><Svg w={9} h={5}><path d="M0 5h9L4.500 0z" fill="#4a4e55" /></Svg></ScrollButton>
          <ScrollTrack>
            <ScrollThumb><Svg w={8} h={8}><path d="M0 .5h8M0 2.500h8M0 4.500h8M0 6.500h8" stroke="#858a93" /></Svg></ScrollThumb>
          </ScrollTrack>
          <ScrollButton $h={17} $line aria-label="Прокрутить вниз"><Svg w={9} h={5}><path d="M0 0h9L4.500 5z" fill="#4a4e55" /></Svg></ScrollButton>
          <ScrollButton $h={17} aria-label="Предыдущая страница"><Svg w={6} h={7}><path d="M0 3h6L3 0zM0 7h6L3 4z" fill="#4a4e55" /></Svg></ScrollButton>
          <ScrollButton $h={17} aria-label="Объект перехода"><Svg w={8} h={8}><circle cx="4" cy="4" r="3" stroke="#5c6068" /></Svg></ScrollButton>
          <ScrollButton $h={17} aria-label="Следующая страница"><Svg w={6} h={7}><path d="M0 0h6L3 3zM0 4h6L3 7z" fill="#4a4e55" /></Svg></ScrollButton>
        </ScrollColumn>
      </Workspace>

      <StatusBar>
        <StatusItem $w={106} $edge>Страница: 1 из 2</StatusItem>
        <StatusItem $w={102} $edge>Число слов: 152</StatusItem>
        <StatusItem $w={34} aria-label="Правописание"><ProofIcon /></StatusItem>
        <StatusItem $w={114} $edge>русский</StatusItem>
        <ViewTools>
          <ViewButton $w={18} $on aria-label="Разметка"><PageViewIcon /></ViewButton>
          <ViewButton $w={18} aria-label="Чтение"><ReadViewIcon /></ViewButton>
          <ViewButton $w={18} aria-label="Веб-документ"><WebViewIcon /></ViewButton>
          <ViewButton $w={18} aria-label="Структура"><OutlineIcon /></ViewButton>
          <ViewButton $w={18} aria-label="Черновик"><DraftIcon /></ViewButton>
          <ZoomValue>130%</ZoomValue>
          <ZoomButton aria-label="Уменьшить"><ZoomSign /></ZoomButton>
          <ZoomRange type="range" min={0} max={100} defaultValue={54} aria-label="Масштаб" />
          <ZoomButton aria-label="Увеличить"><ZoomSign plus /></ZoomButton>
        </ViewTools>
      </StatusBar>

      <TaskBar>
        <StartButton aria-label="Пуск"><StartOrb /></StartButton>
        <Pinned aria-label="Internet Explorer"><ExplorerE /></Pinned>
        <TaskButton aria-label="Проводник"><FolderIcon /></TaskButton>
        <TaskButton aria-label="Chrome"><ChromeIcon /></TaskButton>
        <TaskButton aria-label="Skype"><SkypeIcon /></TaskButton>
        <TaskButton $active aria-label="Word"><WordTaskIcon /></TaskButton>
        <Tray>
          <Language>RU</Language>
          <TrayButton $w={24} aria-label="Скрытые значки"><Svg w={8} h={4}><path d="M0 4h8L4 0z" fill="#fff" /></Svg></TrayButton>
          <TrayButton $w={24} aria-label="Громкость"><SpeakerIcon /></TrayButton>
          <TrayButton $w={24} aria-label="Центр поддержки"><FlagIcon /></TrayButton>
          <TrayButton $w={24} aria-label="Сеть"><NetworkIcon /></TrayButton>
          <TrayButton $w={24} aria-label="Приложение"><LeafIcon /></TrayButton>
          <Clock><span>1:25</span><span>12.03.2017</span></Clock>
          <ShowDesktop aria-label="Показать рабочий стол" />
        </Tray>
      </TaskBar>
    </Window>
  );
}
